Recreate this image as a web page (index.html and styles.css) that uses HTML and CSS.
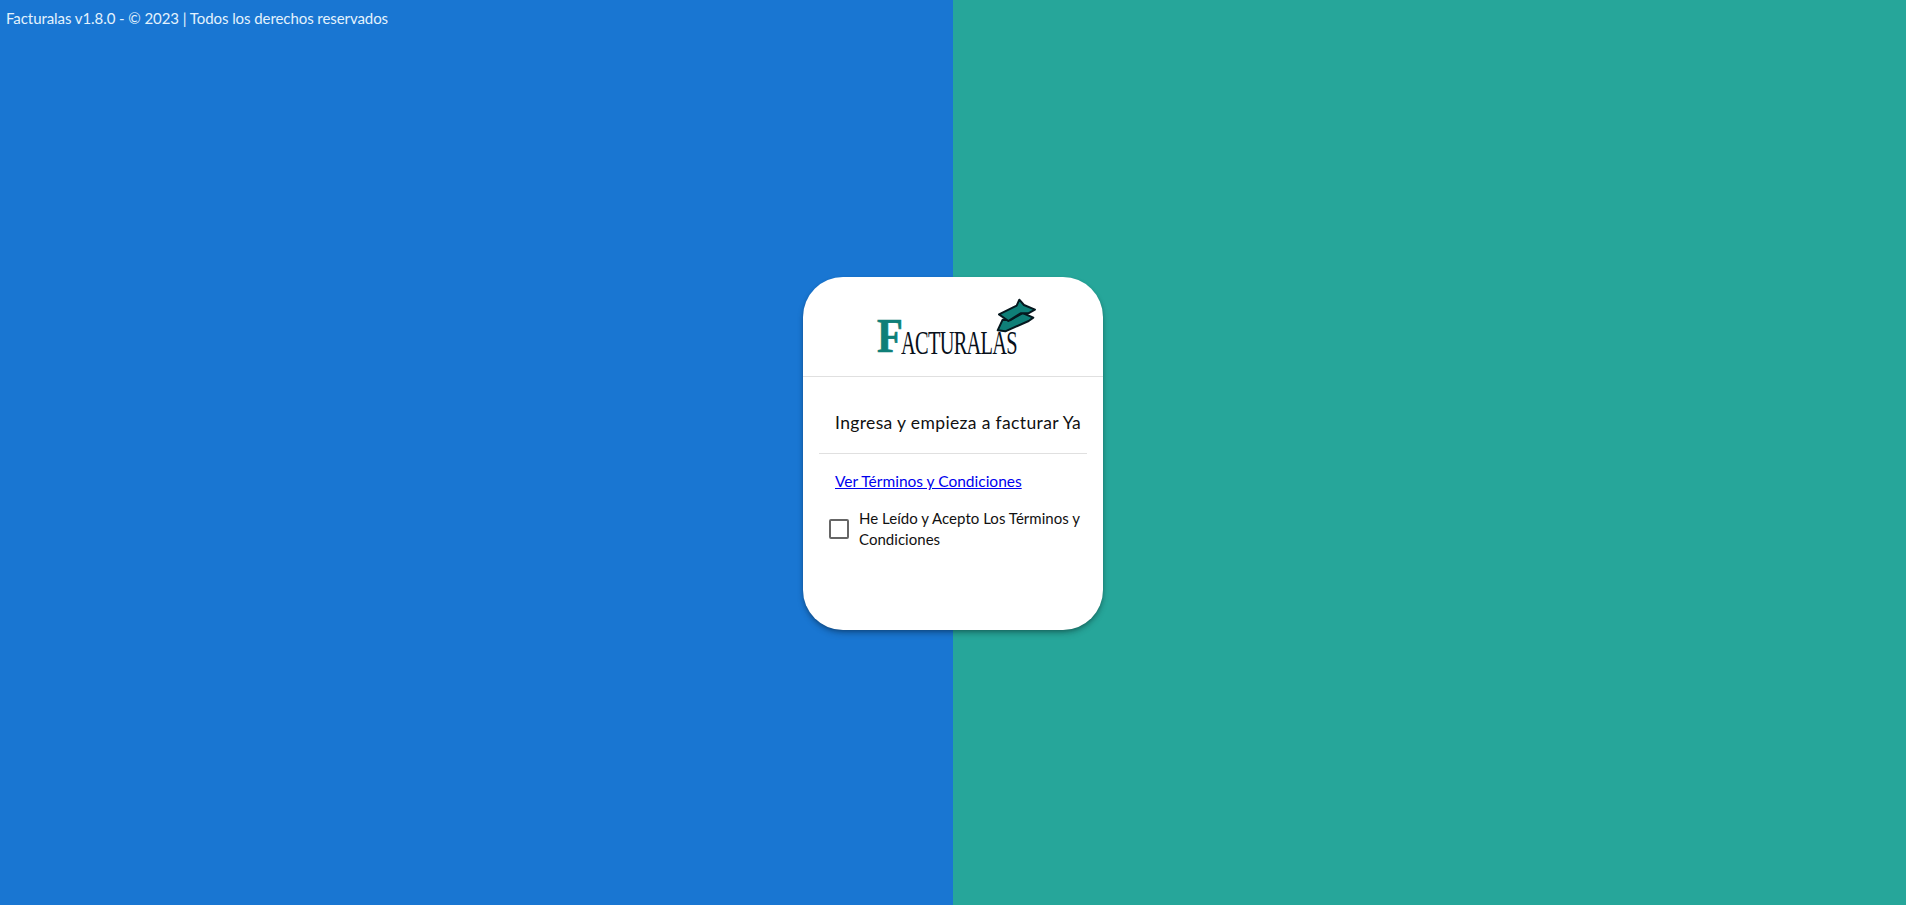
FILE: index.html
```html
<!DOCTYPE html>
<html lang="es">
<head>
<meta charset="utf-8">
<title>Facturalas</title>
<link rel="stylesheet" href="styles.css">
</head>
<body>
<div class="page">
  <div class="half blue"><p class="version">Facturalas v1.8.0 - © 2023 | Todos los derechos reservados</p></div>
  <div class="half green"></div>
  <main class="card">
    <header class="card-head">
      <div class="logo">
        <span class="logo-f">F</span><span class="logo-rest">ACTURALAS</span>
        <svg class="logo-mark" viewBox="405 50 130 110" aria-hidden="true">
          <path d="M413 150 L428 118 L450 120 L488 98 L520 112 L506 122 L436 153 Z" fill="#0f7f78" stroke="#06181f" stroke-width="6" stroke-linejoin="round"/>
          <path d="M417 102 L470 76 L478 58 L492 74 L525 88 L505 99 L482 99 L445 122 Z" fill="#0f7f78" stroke="#06181f" stroke-width="6" stroke-linejoin="round"/>
        </svg>
      </div>
    </header>
    <div class="card-body">
      <h1 class="title">Ingresa y empieza a facturar Ya</h1>
      <hr class="rule">
      <a class="terms" href="#">Ver Términos y Condiciones</a>
      <label class="check">
        <span class="box"></span>
        <span class="check-text">He Leído y Acepto Los Términos y Condiciones</span>
      </label>
    </div>
  </main>
</div>
</body>
</html>
```
FILE: styles.css
```css
* { box-sizing: border-box; }
html, body { margin: 0; height: 100%; }
body { font-family: "Lato", "Noto Sans", sans-serif; color: #111; }
.page { position: relative; display: flex; height: 905px; overflow: hidden; }
.half { flex: 1 1 50%; }
.blue { background: #1976d2; }
.green { background: #26a69a; }
.version { margin: 0; padding: 10px 0 0 6px; color: #e3f2fd; font-size: 15px; line-height: 17px; letter-spacing: -.07px; }
.card { position: absolute; left: 803px; top: 277px; width: 300px; height: 353px; background: #fff; border-radius: 40px; box-shadow: 0 2px 4px -1px rgba(0,0,0,.3), 0 4px 6px rgba(0,0,0,.18); }
.card-head { height: 100px; border-bottom: 1px solid #e0e0e0; display: flex; justify-content: center; }
.logo { position: relative; width: 160px; height: 100px; color: #08101a; }
.logo-f { position: absolute; left: 4px; top: 38px; font: 700 48px/42px "Liberation Serif", serif; color: #0f7f78; -webkit-text-stroke: .7px #0f7f78; transform: scaleX(.88); transform-origin: left; }
.logo-rest { position: absolute; left: 28px; top: 48px; font: 400 34px/36px "Liberation Serif", serif; letter-spacing: -1.2px; transform: scaleX(.6); transform-origin: left; white-space: nowrap; }
.logo-mark { position: absolute; left: 122px; top: 20px; width: 43.3px; height: 36.7px; }
.card-body { padding: 34px 16px 0; }
.title { margin: 0 0 0 16px; font-size: 17.5px; line-height: 24px; font-weight: 400; white-space: nowrap; letter-spacing: .36px; }
.rule { margin: 18px 0 0; border: 0; border-top: 1px solid #e0e0e0; }
.terms { display: block; margin: 17px 0 0 16px; font-size: 15.5px; line-height: 20px; color: #0000ee; }
.check { display: flex; align-items: center; gap: 10px; margin: 17px 0 0 10px; }
.box { flex: none; width: 20px; height: 20px; border: 2px solid #666; border-radius: 2px; }
.check-text { font-size: 15px; line-height: 21px; width: 224px; letter-spacing: .03px; }
```
